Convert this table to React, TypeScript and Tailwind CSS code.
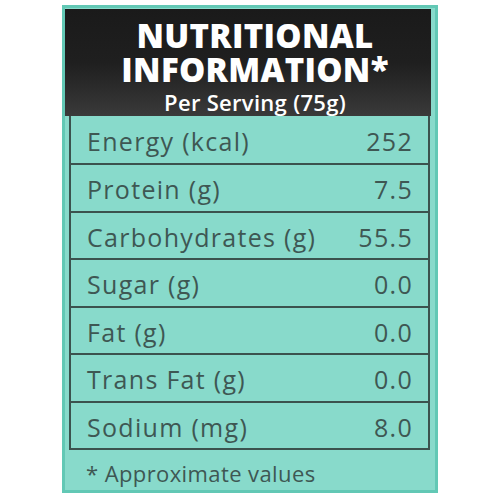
const rows: [string, string][] = [
  ['Energy (kcal)', '252'],
  ['Protein (g)', '7.5'],
  ['Carbohydrates (g)', '55.5'],
  ['Sugar (g)', '0.0'],
  ['Fat (g)', '0.0'],
  ['Trans Fat (g)', '0.0'],
  ['Sodium (mg)', '8.0'],
];

export default function App() {
  return (
    <div className="w-[500px] h-[500px] bg-white flex justify-center pt-[5px] font-['Open_Sans',sans-serif]">
      <div className="w-[376px] h-[488px] bg-[#88dacb] border-[3px] border-[#62c8b5] pr-[4px] pt-[1px] flex flex-col">
        <div className="h-[111px] bg-gradient-to-b from-[#1a1a1a] via-[#1f1f1f] to-[#3a3a3a] flex flex-col items-center pt-[10px] pl-[14px] text-white">
          <div className="text-[33px] font-extrabold leading-[34px] tracking-[0.3px] text-center">
            NUTRITIONAL
            <br />
            INFORMATION*
          </div>
          <div className="text-[22px] font-semibold leading-[24px] mt-[3px] tracking-[0.3px]">Per Serving (75g)</div>
        </div>
        <div className="ml-[4px] mr-[1px] border-2 border-t-0 border-[#3b524e] flex flex-col">
          {rows.map(([label, value], i) => (
            <div
              key={label}
              className={`h-[47.5px] flex items-center justify-between pt-[4px] pl-[16px] pr-[15px] text-[25px] tracking-[1.3px] text-[#3e5753] ${i > 0 ? 'border-t-2 border-[#3b524e]' : ''}`}
            >
              <span>{label}</span>
              <span>{value}</span>
            </div>
          ))}
        </div>
        <div className="pl-[21px] pt-[7px] text-[22px] tracking-[0.4px] text-[#3e5753]">* Approximate values</div>
      </div>
    </div>
  );
}
